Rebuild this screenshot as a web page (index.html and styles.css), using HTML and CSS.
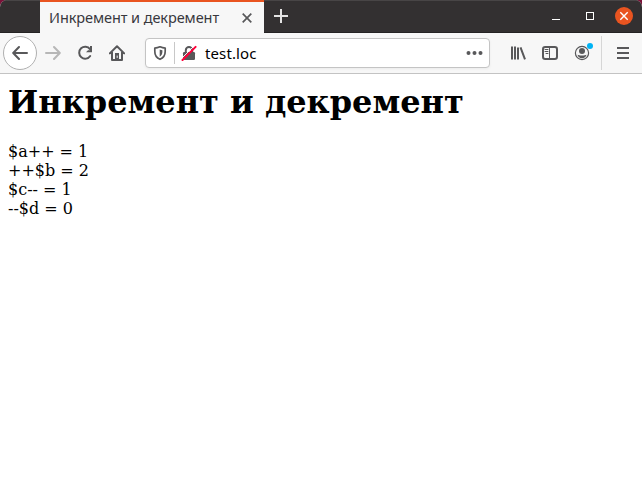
FILE: index.html
```html
<!DOCTYPE html>
<html lang="ru">
<head>
<meta charset="utf-8">
<title>Инкремент и декремент</title>
<link rel="stylesheet" href="styles.css">
</head>
<body>
<div class="window">
  <header class="titlebar">
    <div class="tab">
      <span class="tab-title">Инкремент и декремент</span>
      <svg class="tab-close" width="12" height="12" viewBox="0 0 12 12"><path d="M1.7 1.7l8.6 8.6M10.3 1.7l-8.6 8.6"/></svg>
    </div>
    <svg class="new-tab" width="16" height="16" viewBox="0 0 16 16"><path d="M8 1v14M1 8h14"/></svg>
    <div class="controls">
      <span class="minimize"></span>
      <span class="maximize"></span>
      <span class="close"><svg width="18" height="18" viewBox="0 0 18 18"><path d="M5.3 5.3l7.4 7.4M12.7 5.3l-7.4 7.4"/></svg></span>
    </div>
  </header>
  <nav class="toolbar">
    <span class="back"><svg class="icon" width="16" height="16" viewBox="0 0 16 16"><path d="M15 8H1.5M7 2L1.2 8L7 14"/></svg></span>
    <svg class="icon forward" width="16" height="16" viewBox="0 0 16 16"><path d="M1 8h13.5M9 2l5.8 6L9 14"/></svg>
    <svg class="icon reload" width="16" height="16" viewBox="0 0 16 16"><path d="M13 4.1A6 6 0 1 0 13.2 11"/><path class="fill" d="M15 1v6.2H9l2-2h2V1z"/></svg>
    <svg class="icon home" width="16" height="16" viewBox="0 0 16 16"><path d="M.8 8.4L8 1.2l7.2 7.2M3 7v8h10V7"/><path class="fill" d="M6 8h4v7H6z"/><path class="knob" d="M8.2 11v1.5"/></svg>
    <div class="urlbar">
      <svg class="icon shield" width="16" height="16" viewBox="0 0 16 16"><path d="M8 1.800c1.800 .8 3.400 1.200 5.200 1.300v3.400c0 3.800-2 6.500-5.200 7.800-3.200-1.300-5.200-4-5.200-7.800V3.100c1.800-.1 3.400-.5 5.200-1.300z"/><path class="fill" d="M7.700 4.500c1 .5 1.700.7 2.700.8v1.500c0 2.300-1 4-2.700 5z"/></svg>
      <span class="divider"></span>
      <svg class="icon lock" width="16" height="16" viewBox="0 0 16 16"><path d="M4.800 7V5.200a3.200 3.200 0 0 1 6.400 0V7"/><rect class="fill" x="2" y="7" width="12" height="8" rx="1.200"/><path class="gap" d="M.5 13.600L13.200 .9"/><path class="slash" d="M1.500 15L14.600 1.900"/></svg>
      <span class="url">test.loc</span>
      <svg class="icon more" width="17" height="16" viewBox="0 0 17 16"><circle cx="2.500" cy="8" r="2"/><circle cx="8.500" cy="8" r="2"/><circle cx="14.500" cy="8" r="2"/></svg>
    </div>
    <svg class="icon library" width="16" height="16" viewBox="0 0 16 16"><path d="M2 1.500v13M5 1.500v13M8 2.500v12M10.500 2.300l4.500 12"/></svg>
    <svg class="icon sidebar" width="16" height="16" viewBox="0 0 16 16"><rect x="1" y="2" width="14" height="12" rx="2.200"/><path class="thin" d="M7.500 2v12M3 4.500h3M3 6.500h3M4 8.500h2"/></svg>
    <span class="account">
      <svg class="icon" width="16" height="16" viewBox="0 0 16 16"><circle class="ring" cx="8" cy="8" r="6.600"/><circle class="fill" cx="8" cy="6" r="3"/><path class="fill" d="M3.500 9.700c1 .5 2.100.7 4.500.7s3.500-.2 4.500-.7c-.5 2.200-2.200 3.600-4.500 3.600s-4-1.400-4.500-3.600z"/></svg>
      <i class="badge"></i>
    </span>
    <span class="separator"></span>
    <svg class="icon menu" width="14" height="16" viewBox="0 0 14 16"><path d="M1 3h12M1 8h12M1 13h12"/></svg>
  </nav>
  <main class="page">
    <h1>Инкремент и декремент</h1>
    <p>$a++ = 1<br>++$b = 2<br>$c-- = 1<br>--$d = 0</p>
  </main>
</div>
</body>
</html>
```
FILE: styles.css
```css
* { box-sizing: border-box; }
body { margin: 0; background: #7a1238; }
svg { display: block; flex: none; }
path, rect { fill: none; }
.window { width: 642px; height: 488px; background: #fff; border-radius: 7px 7px 0 0; overflow: hidden; }

.titlebar { display: flex; align-items: center; height: 33px; padding-left: 40px; background: #333031; border-bottom: 1px solid #242223; box-shadow: inset 0 1px #484546; }
.tab { display: flex; align-items: center; width: 224px; height: 33px; margin-bottom: -1px; padding: 0 11px 0 9px; border-top: 2px solid #e95420; background: #f7f7f7; }
.tab-title { width: 180px; padding-bottom: 2px; font: 14.500px/20px "Noto Sans", sans-serif; letter-spacing: -.08px; white-space: nowrap; color: #38383d; }
.tab-close { margin-left: 12px; stroke: #58585a; stroke-width: 1.700; }
.new-tab { margin-left: 9px; stroke: #e4e3e3; stroke-width: 2; }
.controls { display: flex; align-items: center; margin-left: auto; padding-right: 9px; }
.minimize { width: 8px; height: 1px; margin: 6px 26px 0 0; background: #fff; }
.maximize { width: 8px; height: 8px; margin-right: 21px; border: 1px solid #fff; }
.close { width: 18px; height: 18px; border-radius: 50%; background: #e95420; }
.close svg { stroke: #fff; stroke-width: 1.400; }

.toolbar { display: flex; align-items: center; height: 41px; background: #f7f7f7; border-bottom: 1px solid #c3c3c3; padding-left: 3px; }
.icon { stroke: #58585a; stroke-width: 2; stroke-linecap: round; stroke-linejoin: round; }
.icon .fill { fill: #58585a; stroke: none; }
.icon .thin { stroke-width: 1; }
.back { display: grid; place-items: center; width: 34px; height: 34px; border: 1px solid #b0b0b0; border-radius: 50%; background: #fff; }
.forward { margin-left: 8px; stroke: #b7b7b7; }
.reload { margin-left: 16px; }
.home { margin-left: 16px; }
.home .knob { stroke: #f7f7f7; stroke-width: 1; }
.urlbar { display: flex; align-items: center; width: 345px; height: 30px; margin-left: 20px; padding: 0 6px; border: 1px solid #c4c4c4; border-radius: 4px; background: #fff; box-shadow: 0 1px 3px #0000000d; }
.shield { stroke-width: 1.700; }
.divider { width: 1px; height: 22px; margin: 0 6px; background: #c8c8c8; }
.lock .gap { stroke: #fff; stroke-width: 1; }
.lock .slash { stroke: #ff0039; }
.url { margin-left: 8px; font: 15px/20px "Noto Sans", sans-serif; letter-spacing: .12px; color: #000; }
.more { margin-left: auto; fill: #58585a; stroke: none; }
.library { margin-left: 20px; stroke-linecap: butt; }
.sidebar { margin-left: 16px; }
.account { position: relative; margin-left: 16px; }
.account .ring { fill: none; stroke-width: 1.200; }
.badge { position: absolute; top: -2px; right: -3px; width: 6px; height: 6px; border-radius: 50%; background: #00b3f4; }
.separator { width: 1px; height: 34px; margin-left: 11px; background: #d6d6d6; }
.menu { margin-left: 14px; stroke-linecap: butt; }

.page { padding: 9px 8px; font: 16px/19px "DejaVu Serif", serif; color: #000; }
h1 { margin: 0 0 21px; font-size: 32px; line-height: 38px; font-weight: bold; white-space: nowrap; }
p { margin: 0; }
```
